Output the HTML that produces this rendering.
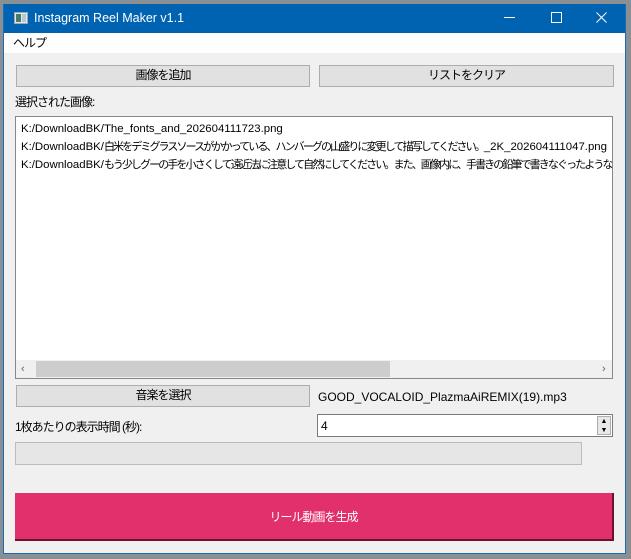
<!DOCTYPE html>
<html><head><meta charset="utf-8"><style>
*{box-sizing:border-box;margin:0;padding:0}
body{width:631px;height:559px;background:#8a8f94;position:relative;overflow:hidden;font-family:"Liberation Sans","Noto Sans CJK JP",sans-serif;font-size:12px;color:#000;line-height:15px}
.win{position:absolute;left:3px;top:4px;width:623px;height:550px;background:#f0f0f0;border:1px solid #1a6bb5;border-top:none}
.title{position:absolute;left:0;top:0;width:100%;height:29px;background:#0063b1;color:#fff;font-size:12.5px}
.title .t{position:absolute;left:30px;top:7px}
.menu{position:absolute;left:0;top:29px;width:100%;height:20px;background:#fff}
.abs{position:absolute}
.btn{position:absolute;background:#e1e1e1;border:1px solid #adadad;text-align:center;line-height:19px;font-size:12px;letter-spacing:-1px}
.list{position:absolute;left:11px;top:112px;width:598px;height:263px;background:#fff;border:1px solid #828790;overflow:hidden}
.list div{position:absolute;left:5px;white-space:nowrap;line-height:15px;height:15px;font-size:11.4px}
.c{font-size:11px;letter-spacing:-1.9px}
.cj{letter-spacing:-1px}
</style></head><body>
<div class="win">
<div class="title">
<svg class="abs" style="left:10px;top:8px" width="14" height="12"><rect x="0.5" y="0.5" width="13" height="11" fill="#dfe8ee" stroke="#9ab"/><rect x="2" y="2" width="5" height="8" fill="#4a7a6a"/><rect x="8" y="2" width="4" height="8" fill="#b8c8d0"/></svg>
<span class="t">Instagram Reel Maker v1.1</span>
<svg class="abs" style="left:500px;top:13px" width="12" height="2"><rect width="11" height="1" fill="#fff"/></svg>
<svg class="abs" style="left:547px;top:8px" width="12" height="12"><rect x="0.5" y="0.5" width="10" height="10" fill="none" stroke="#fff"/></svg>
<svg class="abs" style="left:592px;top:8px" width="12" height="12"><path d="M0.5 0.5L10.5 10.5M10.5 0.5L0.5 10.5" stroke="#fff"/></svg>
</div>
<div class="menu"><span class="abs cj" style="left:9px;top:3px">ヘルプ</span></div>
<div class="btn" style="left:12px;top:61px;width:294px;height:22px">画像を追加</div>
<div class="btn" style="left:315px;top:61px;width:295px;height:22px">リストをクリア</div>
<span class="abs cj" style="left:11px;top:91px">選択された画像:</span>
<div class="list">
<div style="top:5px">K:/DownloadBK/The_fonts_and_202604111723.png</div>
<div style="top:23px">K:/DownloadBK/<span class="c">白米をデミグラスソースがかかっている、ハンバーグの山盛りに変更して描写してください。</span>_2K_202604111047.png</div>
<div style="top:41px">K:/DownloadBK/<span class="c">もう少しグーの手を小さくして遠近法に注意して自然にしてください。また、画像内に、手書きの鉛筆で書きなぐったような</span></div>
<div style="left:0;top:243px;width:596px;height:18px;background:#f0f0f0"></div>
<div style="left:20px;top:244px;width:354px;height:16px;background:#cdcdcd"></div>
<span class="abs" style="left:5px;top:245px;color:#606060;font-size:11px">‹</span>
<span class="abs" style="left:586px;top:245px;color:#606060;font-size:11px">›</span>
</div>
<div class="btn" style="left:12px;top:381px;width:294px;height:22px">音楽を選択</div>
<span class="abs" style="left:314px;top:386px">GOOD_VOCALOID_PlazmaAiREMIX(19).mp3</span>
<span class="abs cj" style="left:11px;top:416px">1枚あたりの表示時間 (秒):</span>
<div class="abs" style="left:313px;top:410px;width:296px;height:23px;background:#fff;border:1px solid #7a7a7a"><span class="abs" style="left:3px;top:4px">4</span>
<div class="abs" style="right:1px;top:1px;width:14px;height:19px;background:#e8e8e8;border:1px solid #adadad;font-size:7px;line-height:9px;text-align:center">▲<br>▼</div></div>
<div class="abs" style="left:11px;top:438px;width:567px;height:23px;background:#e6e6e6;border:1px solid #bcbcbc"></div>
<div class="abs cj" style="left:11px;top:489px;width:599px;height:48px;background:#e1306c;border-right:2px solid #6b1030;border-bottom:2px solid #6b1030;color:#fff;text-align:center;line-height:48px">リール動画を生成</div>
</div>
</body></html>
